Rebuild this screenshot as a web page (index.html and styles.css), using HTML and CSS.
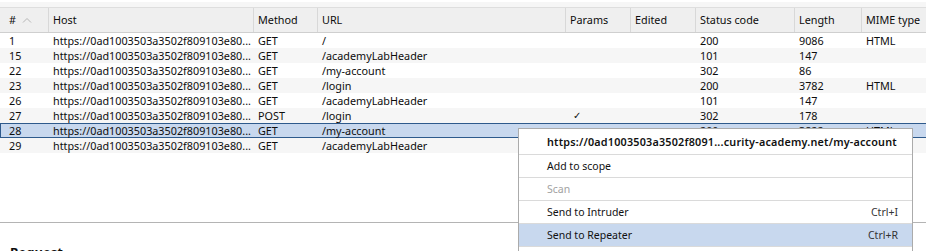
FILE: index.html
```html
<!DOCTYPE html>
<html lang="en">
<head>
<meta charset="utf-8">
<title>HTTP history</title>
<link rel="stylesheet" href="styles.css">
</head>
<body>
<div class="app">
  <div class="topstrip"></div>
  <div class="table">
    <div class="row head">
      <div class="cell first">#<svg class="sort" width="10" height="6" viewBox="0 0 10 6"><polyline points="1,5.5 5,1.5 9,5.5" fill="none" stroke="#b5b5b5" stroke-width="1"/></svg></div>
      <div class="cell">Host</div>
      <div class="cell">Method</div>
      <div class="cell">URL</div>
      <div class="cell">Params</div>
      <div class="cell">Edited</div>
      <div class="cell">Status code</div>
      <div class="cell">Length</div>
      <div class="cell last">MIME type</div>
    </div>
    <div class="row">
      <div class="cell first">1</div><div class="cell">https://0ad1003503a3502f809103e80...</div><div class="cell">GET</div><div class="cell">/</div><div class="cell"></div><div class="cell"></div><div class="cell">200</div><div class="cell">9086</div><div class="cell last">HTML</div>
    </div>
    <div class="row alt">
      <div class="cell first">15</div><div class="cell">https://0ad1003503a3502f809103e80...</div><div class="cell">GET</div><div class="cell">/academyLabHeader</div><div class="cell"></div><div class="cell"></div><div class="cell">101</div><div class="cell">147</div><div class="cell last"></div>
    </div>
    <div class="row">
      <div class="cell first">22</div><div class="cell">https://0ad1003503a3502f809103e80...</div><div class="cell">GET</div><div class="cell">/my-account</div><div class="cell"></div><div class="cell"></div><div class="cell">302</div><div class="cell">86</div><div class="cell last"></div>
    </div>
    <div class="row alt">
      <div class="cell first">23</div><div class="cell">https://0ad1003503a3502f809103e80...</div><div class="cell">GET</div><div class="cell">/login</div><div class="cell"></div><div class="cell"></div><div class="cell">200</div><div class="cell">3782</div><div class="cell last">HTML</div>
    </div>
    <div class="row">
      <div class="cell first">26</div><div class="cell">https://0ad1003503a3502f809103e80...</div><div class="cell">GET</div><div class="cell">/academyLabHeader</div><div class="cell"></div><div class="cell"></div><div class="cell">101</div><div class="cell">147</div><div class="cell last"></div>
    </div>
    <div class="row alt">
      <div class="cell first">27</div><div class="cell">https://0ad1003503a3502f809103e80...</div><div class="cell">POST</div><div class="cell">/login</div><div class="cell check">✓</div><div class="cell"></div><div class="cell">302</div><div class="cell">178</div><div class="cell last"></div>
    </div>
    <div class="row selected">
      <div class="cell first">28</div><div class="cell">https://0ad1003503a3502f809103e80...</div><div class="cell">GET</div><div class="cell">/my-account</div><div class="cell"></div><div class="cell"></div><div class="cell">200</div><div class="cell">3822</div><div class="cell last">HTML</div>
    </div>
    <div class="row alt">
      <div class="cell first">29</div><div class="cell">https://0ad1003503a3502f809103e80...</div><div class="cell">GET</div><div class="cell">/academyLabHeader</div><div class="cell"></div><div class="cell"></div><div class="cell"></div><div class="cell"></div><div class="cell last"></div>
    </div>
  </div>
  <div class="fill"></div>
  <div class="lower">
    <div class="panel-title">Request</div>
  </div>

  <div class="menu">
    <div class="menu-item menu-url">https://0ad1003503a3502f8091...curity-academy.net/my-account</div>
    <div class="menu-item">Add to scope</div>
    <div class="menu-item disabled">Scan</div>
    <div class="menu-item"><span>Send to Intruder</span><span class="key">Ctrl+I</span></div>
    <div class="menu-item active"><span>Send to Repeater</span><span class="key">Ctrl+R</span></div>
    <div class="menu-item"><span>Send to Sequencer</span><span class="key"></span></div>
  </div>
</div>
</body>
</html>
```

FILE: styles.css
```css
html, body {
  margin: 0;
  padding: 0;
  width: 926px;
  height: 251px;
  overflow: hidden;
  background: #ffffff;
}

.app {
  position: relative;
  width: 926px;
  height: 251px;
  display: flex;
  flex-direction: column;
  font-family: "Noto Sans", "Liberation Sans", sans-serif;
  font-size: 10.8px;
  color: #0d0d0d;
}

.topstrip {
  height: 7px;
  flex: none;
  background: linear-gradient(#ffffff 0, #ffffff 2px, #f6f6f6 2px);
  border-bottom: 1px solid #dedede;
}

.table {
  display: flex;
  flex-direction: column;
  flex: none;
}

.row {
  display: grid;
  grid-template-columns: 49px 205px 64px 248px 65px 65px 99px 67px 1fr;
  height: 15px;
  line-height: 15px;
  background: #ffffff;
}

.row.alt {
  background: #f6f6f6;
}

.row.selected {
  background: #c8d8ee;
  box-shadow: inset 0 1px 0 #2e5a8c, inset 0 -1px 0 #2e5a8c, inset 1px 0 0 #2e5a8c;
}

.row.head {
  height: 24px;
  line-height: 24px;
  background: #efefef;
  border-bottom: 1px solid #cfcfcf;
}

.cell {
  padding-left: 4px;
  white-space: nowrap;
  overflow: hidden;
}

.cell.first {
  padding-left: 9px;
}

.head .cell {
  border-right: 1px solid #d8d8d8;
  display: flex;
  align-items: center;
}

.head .cell.last {
  border-right: none;
}

.sort {
  margin-left: 6px;
  margin-top: -1px;
}

.check {
  padding-left: 7px;
  font-family: "DejaVu Sans", sans-serif;
  font-size: 10px;
  font-weight: bold;
}

.fill {
  flex: 1;
  border-bottom: 1px solid #b4b4b4;
}

.lower {
  height: 28px;
  flex: none;
  padding-left: 10px;
}

.panel-title {
  padding-top: 20px;
  font-weight: bold;
  font-size: 13px;
  line-height: 18px;
}

.menu {
  position: absolute;
  left: 518px;
  top: 128px;
  width: 393px;
  background: #ffffff;
  border: 1px solid #ababab;
}

.menu-item {
  height: 22px;
  line-height: 22px;
  border-top: 1px solid #dadada;
  padding-left: 28px;
  padding-right: 14px;
  display: flex;
  justify-content: space-between;
  white-space: nowrap;
  font-size: 10.5px;
  color: #111111;
}

.menu-item.menu-url {
  height: 25px;
  line-height: 26px;
  border-top: none;
  font-size: 10.8px;
  font-weight: 600;
  letter-spacing: 0.2px;
}

.menu-item.disabled {
  color: #a2a2a2;
}

.menu-item.active {
  background: #c8d8ee;
}

.key {
  color: #333333;
}
```
